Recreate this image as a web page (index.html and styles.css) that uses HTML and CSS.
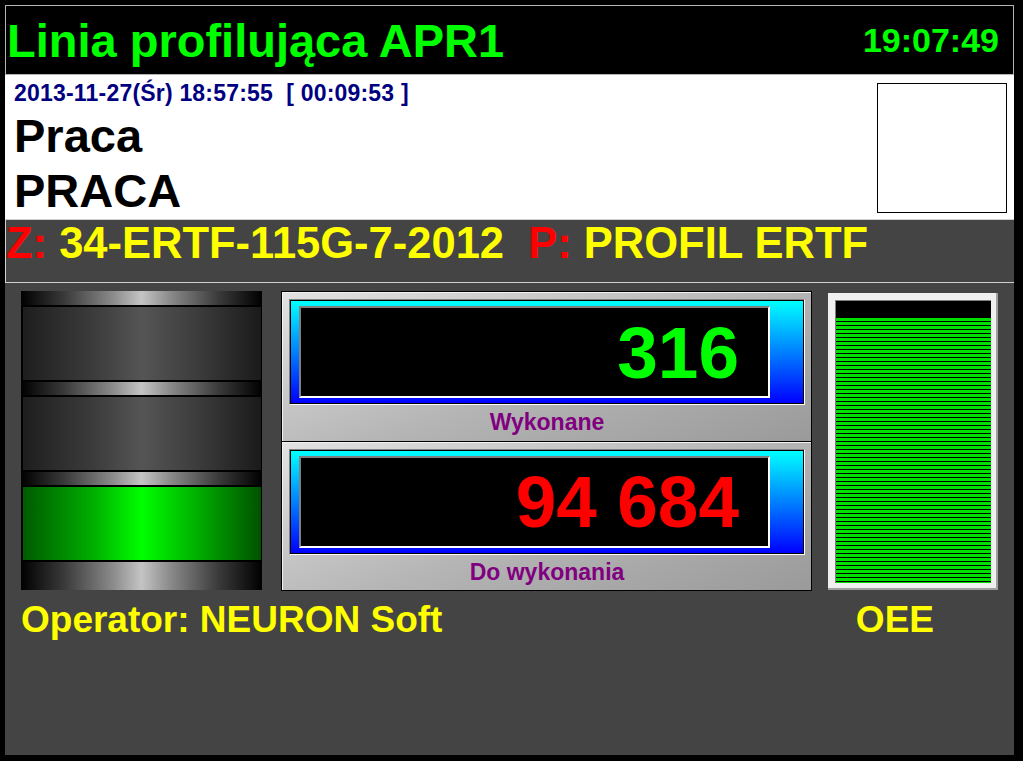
FILE: index.html
```html
<!DOCTYPE html>
<html lang="pl">
<head>
<meta charset="utf-8">
<title>Linia profilująca APR1</title>
<link rel="stylesheet" href="styles.css">
</head>
<body>
<div class="screen">
  <header class="header">
    <h1 class="title">Linia profilująca APR1</h1>
    <div class="clock">19:07:49</div>
  </header>

  <section class="info">
    <div class="status">
      <div class="stamp">2013-11-27(Śr) 18:57:55  [ 00:09:53 ]</div>
      <div class="state">Praca</div>
      <div class="state">PRACA</div>
    </div>
    <div class="indicator"></div>
  </section>

  <section class="order"><span class="key">Z:</span> <span class="val">34-ERTF-115G-7-2012</span>  <span class="key">P:</span> <span class="val">PROFIL ERTF</span></section>

  <main class="main">
    <div class="row">
      <div class="tank">
        <div class="ring ring-top"></div>
        <div class="seg seg-empty"></div>
        <div class="ring"></div>
        <div class="seg seg-empty"></div>
        <div class="ring"></div>
        <div class="seg seg-full"></div>
        <div class="ring ring-bottom"></div>
      </div>

      <div class="counters">
        <div class="counter">
          <div class="bezel">
            <div class="bezel-in">
              <div class="display done">316</div>
            </div>
          </div>
          <div class="caption">Wykonane</div>
        </div>
        <div class="counter">
          <div class="bezel">
            <div class="bezel-in">
              <div class="display todo">94 684</div>
            </div>
          </div>
          <div class="caption">Do wykonania</div>
        </div>
      </div>

      <div class="oee">
        <div class="oee-inner">
          <div class="oee-empty"></div>
          <div class="oee-fill"></div>
        </div>
      </div>
    </div>

    <div class="labels">
      <span class="operator">Operator: NEURON Soft</span>
      <span class="oee-label">OEE</span>
    </div>
  </main>
</div>
</body>
</html>
```
FILE: styles.css
```css
html, body {
  margin: 0;
  padding: 0;
}

body {
  background: #000;
  width: 1023px;
  height: 761px;
  overflow: hidden;
  font-family: "Liberation Sans", Arial, sans-serif;
  font-weight: bold;
}

.screen {
  margin-left: 5px;
  padding-top: 5px;
  width: 1009px;
}

/* ---------- header ---------- */
.header {
  box-sizing: border-box;
  height: 70px;
  border: 1px solid #b4b4b4;
  background: #000;
  display: flex;
  align-items: center;
  justify-content: space-between;
  padding: 0 14px 0 1px;
}

.title {
  margin: 0;
  font-size: 47px;
  line-height: 1;
  font-weight: bold;
  color: #00ff00;
}

.clock {
  font-size: 34px;
  line-height: 1;
  color: #00ff00;
}

/* ---------- info (white) ---------- */
.info {
  box-sizing: border-box;
  height: 144px;
  background: #fff;
  display: flex;
  justify-content: space-between;
  align-items: flex-start;
  padding: 5px 7px 0 9px;
  overflow: hidden;
}

.stamp {
  font-size: 23px;
  line-height: 26px;
  letter-spacing: 0.2px;
  color: #000080;
  white-space: pre;
}

.state {
  font-size: 47px;
  line-height: 55px;
  color: #000;
  margin-left: 0;
}

.stamp + .state {
  margin-top: 2px;
}

.indicator {
  width: 128px;
  height: 128px;
  border: 1px solid #000;
  background: #fff;
  margin-top: 3px;
}

/* ---------- order band ---------- */
.order {
  box-sizing: border-box;
  height: 64px;
  background: #444;
  border: 1px solid #d0d0d0;
  border-right: none;
  padding: 2px 0 0 0;
  font-size: 43.5px;
  line-height: 1;
  color: #ffff00;
  white-space: pre;
}

.key {
  color: #ff0000;
}

/* ---------- main ---------- */
.main {
  box-sizing: border-box;
  height: 472px;
  background: #444;
  padding: 8px 0 0 16px;
}

.row {
  display: flex;
  align-items: flex-start;
}

/* tank */
.tank {
  width: 241px;
  height: 299px;
  background: #000;
  display: flex;
  flex-direction: column;
  gap: 2px;
}

.ring {
  height: 13px;
  background: linear-gradient(to right, #000 0%, #3a3a3a 18%, #8a8a8a 38%, #c4c4c4 50%, #8a8a8a 62%, #3a3a3a 82%, #000 100%);
}

.ring-top {
  height: 14px;
}

.ring-bottom {
  height: 28px;
}

.seg {
  height: 73px;
  margin: 0 1px 0 2px;
}

.seg-empty {
  background: linear-gradient(to right, #1e1e1e 0%, #3c3c3c 30%, #555 50%, #3a3a3a 75%, #1a1a1a 100%);
}

.seg-full {
  background: linear-gradient(to right, #005a00 0%, #00b000 30%, #00ff00 50%, #00a800 75%, #005200 100%);
}

/* counters */
.counters {
  box-sizing: border-box;
  width: 531px;
  height: 300px;
  margin-left: 19px;
  border: 1px solid #000;
  display: flex;
  flex-direction: column;
}

.counter {
  flex: 1;
  box-sizing: border-box;
  background: linear-gradient(160deg, #e2e2e2 0%, #b4b4b4 55%, #9a9a9a 100%);
  box-shadow: inset 1px 1px 0 #f2f2f2;
  padding: 7px 6px 0 7px;
  display: flex;
  flex-direction: column;
}

.counter + .counter {
  border-top: 1px solid #000;
}

.bezel {
  box-sizing: border-box;
  height: 106px;
  border: 1px solid;
  border-color: #808080 #fff #fff #808080;
}

.bezel-in {
  box-sizing: border-box;
  height: 100%;
  border: 1px solid #000;
  background: linear-gradient(to bottom, #00ffff 0%, #0080ff 50%, #0000ff 100%);
  padding: 5px 33px 5px 8px;
}

.display {
  box-sizing: border-box;
  height: 100%;
  background: #000;
  border: 2px solid;
  border-color: #808080 #fff #fff #808080;
  display: flex;
  align-items: center;
  justify-content: flex-end;
  padding-right: 29px;
  font-size: 73px;
  line-height: 1;
}

.done {
  color: #00ff00;
}

.todo {
  color: #ff0000;
}

.caption {
  flex: 1;
  display: flex;
  align-items: center;
  justify-content: center;
  font-size: 23px;
  line-height: 1;
  color: #800080;
}

/* oee */
.oee {
  box-sizing: border-box;
  width: 170px;
  height: 297px;
  margin: 2px 0 0 16px;
  background: #f0f0f0;
  border-right: 2px solid #a0a0a0;
  border-bottom: 2px solid #a0a0a0;
  padding: 7px 5px 5px 7px;
}

.oee-inner {
  box-sizing: border-box;
  height: 100%;
  border-top: 1px solid #808080;
  border-left: 1px solid #808080;
  display: flex;
  flex-direction: column;
}

.oee-empty {
  height: 17px;
  background: #000;
}

.oee-fill {
  flex: 1;
  background: repeating-linear-gradient(to bottom, #00e000 0, #00e000 3px, #000 3px, #000 4px);
}

/* labels */
.labels {
  display: flex;
  justify-content: space-between;
  margin-top: 10px;
  font-size: 37px;
  line-height: 1;
  color: #ffff00;
}

.oee-label {
  margin-right: 80px;
}
```
